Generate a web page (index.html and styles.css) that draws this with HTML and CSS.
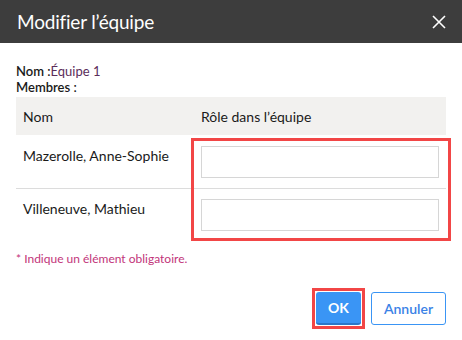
FILE: index.html
```html
<!DOCTYPE html>
<html lang="fr">
<head>
    <meta charset="UTF-8">
    <meta name="viewport" content="width=device-width, initial-scale=1.0">
    <title>Modifier l'équipe</title>
    <link rel="stylesheet" href="styles.css">
</head>
<body>
    <div class="dialog">
        <div class="dialog-header">
            <h2 class="dialog-title">Modifier l’équipe</h2>
            <button class="close-btn" aria-label="Fermer">
                <svg width="14" height="14" viewBox="0 0 14 14">
                    <path d="M1 1 L13 13 M13 1 L1 13" stroke="#fff" stroke-width="1.6" fill="none"/>
                </svg>
            </button>
        </div>

        <div class="dialog-body">
            <div class="info-line"><strong>Nom :</strong><span class="team-name">Équipe 1</span></div>
            <div class="info-line"><strong>Membres :</strong></div>

            <div class="table-wrap">
                <table class="members">
                    <thead>
                        <tr>
                            <th class="col-name">Nom</th>
                            <th>Rôle dans l’équipe</th>
                        </tr>
                    </thead>
                    <tbody>
                        <tr>
                            <td>Mazerolle, Anne-Sophie</td>
                            <td><input type="text" class="role-input"></td>
                        </tr>
                        <tr>
                            <td>Villeneuve, Mathieu</td>
                            <td><input type="text" class="role-input"></td>
                        </tr>
                    </tbody>
                </table>
                <div class="highlight"></div>
            </div>

            <p class="required-note">* Indique un élément obligatoire.</p>

            <div class="actions">
                <span class="focus-ring"><button class="btn btn-primary">OK</button></span>
                <button class="btn btn-secondary">Annuler</button>
            </div>
        </div>
    </div>
</body>
</html>
```

FILE: styles.css
```css
body, html {
    margin: 0;
    padding: 0;
    background: #fff;
    font-family: 'Lato', 'Liberation Sans', sans-serif;
    color: #1a1a1a;
}

.dialog {
    width: 462px;
    height: 340px;
}

.dialog-header {
    height: 43px;
    background-color: #3d3d3d;
    display: flex;
    align-items: center;
    justify-content: space-between;
    padding: 0 16px 0 17px;
}
.dialog-title {
    margin: 0;
    font-size: 19px;
    font-weight: 400;
    color: #fff;
    letter-spacing: -0.2px;
}
.close-btn {
    background: none;
    border: none;
    padding: 0;
    width: 14px;
    height: 14px;
    display: flex;
}

.dialog-body {
    padding: 20px 16px 0 16px;
}

.info-line {
    font-size: 13px;
    line-height: 16px;
}
.info-line strong {
    font-weight: 600;
}
.team-name {
    color: #5b2d5a;
}

.table-wrap {
    position: relative;
    margin-top: 2px;
}
.members {
    width: 100%;
    border-collapse: collapse;
    font-size: 14px;
}
.members th {
    background-color: #f2f1ef;
    text-align: left;
    font-weight: 400;
    height: 38px;
    padding: 0 7px;
    box-sizing: border-box;
}
.members th.col-name {
    width: 178px;
}
.members td {
    padding: 11px 7px 10px 7px;
    vertical-align: top;
    line-height: 20px;
}
.members tbody tr:first-child td {
    border-bottom: 1px solid #dcdcdc;
}
.members tbody tr:last-child td {
    padding-top: 10px;
}
.role-input {
    display: block;
    width: 100%;
    height: 32px;
    box-sizing: border-box;
    border: 1px solid #d6d6d6;
    margin: 0;
}

.highlight {
    position: absolute;
    left: 175px;
    top: 41px;
    width: 260px;
    height: 103px;
    border: 3px solid #f24646;
    box-sizing: border-box;
    pointer-events: none;
}

.required-note {
    margin: 10px 0 0 0;
    font-size: 12px;
    color: #c2347a;
}

.actions {
    display: flex;
    justify-content: flex-end;
    align-items: center;
    gap: 6px;
    margin-top: 22px;
}
.focus-ring {
    display: flex;
    border: 3px solid #f24646;
    padding: 1px;
}
.btn {
    height: 33px;
    border-radius: 3px;
    font-family: 'Lato', 'Liberation Sans', sans-serif;
    font-size: 14px;
    padding: 0;
    box-sizing: border-box;
}
.btn-primary {
    width: 45px;
    background-color: #3a95f5;
    color: #fff;
    font-weight: 700;
    border: none;
    border-bottom: 2px solid #2b77c9;
}
.btn-secondary {
    width: 75px;
    background: #fff;
    color: #3a82e6;
    border: 1px solid #3a95f5;
    font-weight: 600;
}
```
